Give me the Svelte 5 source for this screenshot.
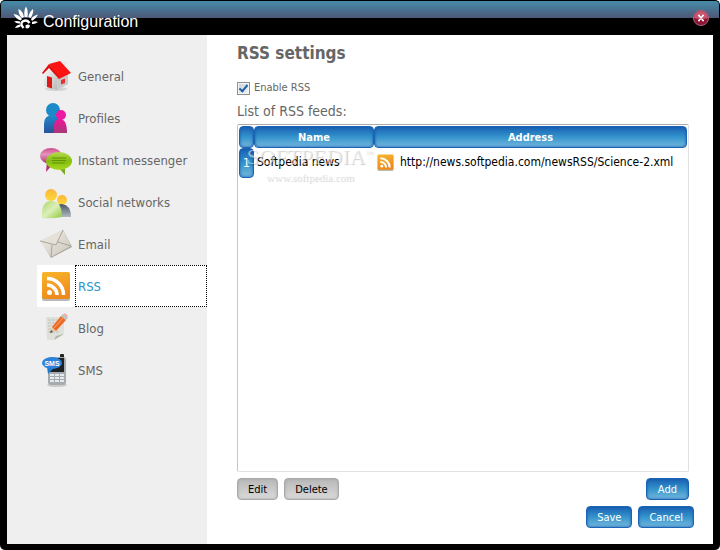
<script lang="ts">
	type Feed = { name: string; address: string };

	const sections = [
		"General",
		"Profiles",
		"Instant messenger",
		"Social networks",
		"Email",
		"RSS",
		"Blog",
		"SMS"
	];

	let current = $state("RSS");
	let enabled = $state(true);
	let feeds: Feed[] = $state([
		{ name: "Softpedia news", address: "http://news.softpedia.com/newsRSS/Science-2.xml" }
	]);
</script>

{#snippet rssIcon()}
	<rect x="1" y="2" width="28" height="28" rx="2" fill="#b9b9b9" />
	<rect x="1" y="1" width="28" height="27" rx="2" fill="url(#orange)" />
	<circle cx="8.500" cy="21.500" r="2.500" fill="#fff" />
	<path d="M6 14a10 10 0 0 1 10 10M6 7.500a16.500 16.500 0 0 1 16.500 16.500" fill="none" stroke="#fff" stroke-width="3.600" />
{/snippet}

<svg class="defs" width="0" height="0" aria-hidden="true">
	<defs>
		<linearGradient id="orange" x1="0" y1="0" x2="0.300" y2="1">
			<stop offset="0" stop-color="#f8b62c" />
			<stop offset="1" stop-color="#ee8a1c" />
		</linearGradient>
		<linearGradient id="wall" x1="0" y1="0" x2="1" y2="1">
			<stop offset="0" stop-color="#fff" />
			<stop offset="1" stop-color="#b5b5b5" />
		</linearGradient>
		<linearGradient id="blue" x1="0" y1="0" x2="0" y2="1">
			<stop offset="0" stop-color="#1d8dd0" />
			<stop offset="1" stop-color="#2b5299" />
		</linearGradient>
		<linearGradient id="pink" x1="0" y1="0" x2="0" y2="1">
			<stop offset="0" stop-color="#f0149c" />
			<stop offset="1" stop-color="#a83a78" />
		</linearGradient>
		<linearGradient id="rose" x1="0" y1="0" x2="0" y2="1">
			<stop offset="0" stop-color="#cf4d8e" />
			<stop offset="0.400" stop-color="#e493bd" />
			<stop offset="1" stop-color="#b32d70" />
		</linearGradient>
		<linearGradient id="lime" x1="0" y1="0" x2="0" y2="1">
			<stop offset="0" stop-color="#b2dc50" />
			<stop offset="0.500" stop-color="#88bd10" />
			<stop offset="1" stop-color="#a4d820" />
		</linearGradient>
		<linearGradient id="head" x1="0" y1="0" x2="0" y2="1">
			<stop offset="0" stop-color="#fbb53a" />
			<stop offset="1" stop-color="#ffda3a" />
		</linearGradient>
		<linearGradient id="mint" x1="0" y1="0" x2="1" y2="1">
			<stop offset="0" stop-color="#a9d86a" />
			<stop offset="0.500" stop-color="#dcefba" />
			<stop offset="1" stop-color="#8bc832" />
		</linearGradient>
		<linearGradient id="slate" x1="0" y1="0" x2="0" y2="1">
			<stop offset="0" stop-color="#4a5661" />
			<stop offset="1" stop-color="#aeb9c3" />
		</linearGradient>
		<linearGradient id="paper" x1="0" y1="0" x2="1" y2="1">
			<stop offset="0" stop-color="#f1eee8" />
			<stop offset="1" stop-color="#cbc7bc" />
		</linearGradient>
	</defs>
</svg>

<div class="window">
	<header>
		<svg class="logo" viewBox="0 0 26 24" width="26" height="24" aria-hidden="true">
			<g fill="#fff">
				<path d="M11.500 11Q10.500 5 13 0.500Q15.500 5 14.500 11Z" />
				<path d="M9 12Q5 8 5.500 3Q10 5 11 11Z" />
				<path d="M15.500 11Q16 6 20 3Q21 7 17.500 12Z" />
				<path d="M7.500 14.500Q3 13 0.500 8Q6 8.500 9 13Z" />
				<path d="M18 13Q20 9.500 25 8.500Q23 13 19 15Z" />
				<path d="M7 15.500Q4 14.500 1 15.500Q4 18 7 17.500Z" />
				<path d="M19 16Q22 14.500 25 16Q22 18.500 19 18Z" />
				<path d="M7 18.500Q3 19 2 22Q6 22 8 20Z" />
			</g>
			<path d="M10.500 22Q6.500 17.500 10 15.200Q14 13 16.500 17" fill="none" stroke="#fff" stroke-width="2.400" />
			<path d="M12.500 19.500Q15 17.500 17 19.500Q16.500 22.500 14 22.500Q12 22 12.500 19.500Z" fill="#fff" />
		</svg>
		<span class="title">Configuration</span>
		<button class="close" aria-label="Close">
			<svg viewBox="0 0 16 16" width="16" height="16" aria-hidden="true">
				<circle cx="8" cy="8" r="7.500" fill="#8d1432" stroke="#aa6478" />
				<path d="M1 8a7 7 0 0 1 14 0q-7 2-14 0z" fill="#c9566e" />
				<path d="M6 5.500l4 5M10 5.500l-4 5M5 5.500h2M9 5.500h2M5 10.500h2M9 10.500h2" stroke="#fff" stroke-width="1.500" />
			</svg>
		</button>
	</header>

	<div class="body">
		<nav>
			{#each sections as section}
				<button class="item" class:selected={section === current} onclick={() => (current = section)}>
					<span class="icon">
						<svg viewBox="0 0 34 34" width="34" height="34" aria-hidden="true">
							{#if section === "General"}
								<ellipse cx="17" cy="30" rx="11" ry="2" fill="#d4d4d4" />
								<path d="M5 13L10 7L19 19L18 31L5 27Z" fill="url(#wall)" />
								<path d="M19 18L29 14V25L18 31Z" fill="#c9c9c9" />
								<path d="M23 3h4v7h-4z" fill="#e8e8e8" />
								<path d="M10 5L21 2L32 14L20 20Z" fill="#fb1414" />
								<path d="M10 5L3 14L4 15L10 9L20 20L20 18Z" fill="#dd1010" />
								<path d="M8 17l5 1.500v11l-5-1.500z" fill="#e01818" />
								<path d="M22 21l4-1.500v4.500l-4 1.500z" fill="#e83030" />
							{:else if section === "Profiles"}
								<circle cx="14" cy="9" r="7" fill="#1b8ac8" />
								<path d="M5 32V23Q5 14 14 14Q23 14 22 32Z" fill="url(#blue)" />
								<circle cx="22" cy="14" r="5" fill="#ef18a2" />
								<path d="M15 32V25Q15 18 21 18Q28 18 28 32Z" fill="url(#pink)" />
							{:else if section === "Instant messenger"}
								<path d="M8 18L7 29L14 21Z" fill="#b32d70" />
								<ellipse cx="12" cy="13" rx="11" ry="8" fill="url(#rose)" />
								<path d="M19 24L26 32V22Z" fill="#78ac20" />
								<ellipse cx="20" cy="18" rx="13" ry="9" fill="url(#lime)" />
								<path d="M13 15h14M13 17.500h14M13 20h13" stroke="#5f9500" />
							{:else if section === "Social networks"}
								<circle cx="23" cy="15" r="5" fill="url(#head)" />
								<path d="M16 32V25Q16 19 23 19Q32 20 32 32Z" fill="url(#slate)" />
								<circle cx="12" cy="10" r="6" fill="url(#head)" />
								<path d="M3 33Q2 16 12 16Q23 16 23 32Q12 34 3 33Z" fill="url(#mint)" />
							{:else if section === "Email"}
								<path d="M2 14L24 3L33 20L12 31Z" fill="#aaa69a" />
								<path d="M1 14L24 3L32 19L12 30Z" fill="url(#paper)" />
								<path d="M12 30L13 18M32 19L19 15" stroke="#aaa598" fill="none" />
								<path d="M1 14L17 18L24 3" fill="#e5e1d8" stroke="#aaa598" />
							{:else if section === "RSS"}
								<g transform="translate(2 2)">{@render rssIcon()}</g>
							{:else if section === "Blog"}
								<path d="M7 6H25V23L15 29H8Z" fill="#e0e0da" />
								<path d="M15 29L17 25L25 23Z" fill="#aeb8a5" />
								<path d="M9 9h10M9 12h8M9 15h5M9 18h4M9 21h12" stroke="#c2c2bd" stroke-dasharray="3 1" />
								<path d="M11 22L13 16L17 20Z" fill="#e8c8a0" />
								<path d="M11 22L12 19L14 21Z" fill="#444" />
								<path d="M13 16L22 5L27 9L17 20Z" fill="#ed6a23" />
								<path d="M15 17L24 7" stroke="#ffa66e" />
								<path d="M22 5L24 3L29 7L27 9Z" fill="#bec3c8" />
								<path d="M24 3Q28 1 29 7Z" fill="#f5a79c" />
							{:else}
								<ellipse cx="18" cy="32" rx="10" ry="2" fill="#ccc" />
								<rect x="21" y="1" width="4" height="5" rx="1" fill="#222" />
								<rect x="9" y="4" width="18" height="28" rx="3" fill="#a6abaf" />
								<rect x="11" y="5" width="14" height="14" fill="#1d2124" />
								<path d="M11 22h4m1 0h4m1 0h4M11 25h4m1 0h4m1 0h4M11 28h4m1 0h4m1 0h4" stroke="#e4ebef" stroke-width="2" />
								<path d="M8 14L9 21L14 16Z" fill="#2179cf" />
								<ellipse cx="13" cy="10" rx="10" ry="6" fill="#2d83dc" />
								<text x="13" y="13" class="sms">SMS</text>
							{/if}
						</svg>
					</span>
					<span class="label">{section}</span>
				</button>
			{/each}
		</nav>

		<main>
			<h1>RSS settings</h1>
			<label class="check">
				<input type="checkbox" bind:checked={enabled} />
				Enable RSS
			</label>
			<h2 id="feeds">List of RSS feeds:</h2>

			<div class="list">
				<table aria-labelledby="feeds">
					<thead>
						<tr>
							<th class="num"></th>
							<th class="name">Name</th>
							<th>Address</th>
						</tr>
					</thead>
					<tbody>
						{#each feeds as feed, i}
							<tr>
								<th class="num">{i + 1}</th>
								<td>{feed.name}</td>
								<td>
									<span class="address">
										<svg viewBox="0 0 30 30" width="17" height="17" aria-hidden="true">{@render rssIcon()}</svg>
										{feed.address}
									</span>
								</td>
							</tr>
						{/each}
					</tbody>
				</table>
				<div class="watermark">
					<span class="brand">SOFTPEDIA<sup>™</sup></span>
					<span class="site">www.softpedia.com</span>
				</div>
			</div>

			<div class="actions">
				<button class="btn gray">Edit</button>
				<button class="btn gray">Delete</button>
				<button class="btn add">Add</button>
			</div>
			<footer>
				<button class="btn">Save</button>
				<button class="btn">Cancel</button>
			</footer>
		</main>
	</div>
</div>

<style>
	:global(body) {
		background: #fff;
	}

	.defs {
		position: absolute;
	}

	button {
		font-family: inherit;
		cursor: pointer;
	}

	.window {
		box-sizing: border-box;
		min-height: 100vh;
		display: flex;
		flex-direction: column;
		padding: 0 6px 6px;
		border: solid #000;
		border-width: 1px 1px 0 1px;
		border-radius: 5px;
		background: linear-gradient(#468baa, #4d5876 17px, #000 17px, #000);
		background-repeat: no-repeat;
		font-family: Tahoma, "DejaVu Sans Condensed", "DejaVu Sans", sans-serif;
		color: #666;
	}

	header {
		height: 34px;
		display: flex;
		align-items: center;
		padding: 0 4px 0 6px;
	}

	.title {
		flex: 1;
		margin-left: 4px;
		padding-top: 8px;
		font: 16px "Liberation Sans", Arial, sans-serif;
		color: #fff;
	}

	.close {
		display: flex;
		padding: 0;
		border: none;
		background: none;
	}

	.body {
		flex: 1;
		display: flex;
		background: #fff;
	}

	nav {
		box-sizing: border-box;
		width: 200px;
		flex: none;
		padding: 20px 0 0 30px;
		background: #efefef;
	}

	.item {
		display: flex;
		width: 100%;
		height: 42px;
		padding: 0;
		border: none;
		outline: none;
		background: none;
		color: #666;
		font-size: 13px;
		text-align: left;
	}

	.icon {
		width: 38px;
		height: 42px;
		display: flex;
		align-items: center;
		justify-content: center;
	}

	.label {
		box-sizing: border-box;
		flex: 1;
		height: 42px;
		padding-left: 2px;
		border: 1px solid transparent;
		line-height: 42px;
	}

	.selected {
		background: #fff;
		color: #2b95cc;
	}

	.selected .label {
		border: 1px dotted #000;
	}

	.sms {
		font: bold 7px "Liberation Sans", sans-serif;
		fill: #fff;
		text-anchor: middle;
	}

	main {
		flex: 1;
		min-width: 0;
		display: flex;
		flex-direction: column;
		padding: 8px 24px 16px 30px;
	}

	h1 {
		margin: 0;
		font-size: 17px;
		line-height: 20px;
	}

	.check {
		display: flex;
		align-items: center;
		gap: 4px;
		margin-top: 16px;
		font-size: 11px;
		line-height: 18px;
	}

	.check input {
		appearance: none;
		width: 13px;
		height: 13px;
		margin: 0;
		display: grid;
		place-items: center;
		border: 1px solid #8e8f8f;
		background: linear-gradient(135deg, #c6cfd6, #f6f6f6);
		box-shadow: inset 0 0 0 1px #f4f4f4;
	}

	.check input:checked::before {
		content: "";
		width: 3px;
		height: 7px;
		margin-top: -2px;
		border: solid #1d5fa8;
		border-width: 0 2px 2px 0;
		transform: rotate(40deg);
	}

	h2 {
		margin: 4px 0 0;
		font-size: 14px;
		font-weight: normal;
		line-height: 20px;
	}

	.list {
		position: relative;
		flex: 1;
		margin-top: 3px;
		padding: 1px 1px 0;
		border: 1px solid #dfe1e4;
		border-top: 1px solid #a9a9a9;
		border-left-color: #c4c6c9;
		border-radius: 2px;
	}

	table {
		width: 100%;
		table-layout: fixed;
		border-collapse: separate;
		border-spacing: 0;
		font-size: 12px;
		color: #000;
	}

	th,
	.btn {
		box-sizing: border-box;
		border: 1px solid #1c64b4;
		border-radius: 4px;
		background: linear-gradient(#1a62b4, #3494cc 50%, #75b8dc);
		box-shadow: inset 0 0 3px #1658ac;
		color: #fff;
	}

	th {
		height: 22px;
		padding: 0;
		font-size: 11px;
	}

	.num {
		width: 15px;
	}

	.name {
		width: 120px;
	}

	tbody .num {
		height: 30px;
		font-size: 12px;
		font-weight: normal;
	}

	td {
		padding: 0 3px 2px;
		white-space: nowrap;
	}

	.address {
		display: flex;
		align-items: center;
		gap: 6px;
	}

	.watermark {
		position: absolute;
		top: 20px;
		left: 7px;
		width: 130px;
		display: flex;
		flex-direction: column;
		align-items: center;
		pointer-events: none;
		font-family: "Liberation Serif", serif;
		color: rgba(255, 255, 255, 0.5);
		text-shadow: 1px 1px 1px rgba(0, 0, 0, 0.2);
	}

	.brand {
		font-size: 22px;
		line-height: 24px;
	}

	.brand sup {
		font-size: 8px;
		line-height: 8px;
	}

	.site {
		font-size: 11px;
		line-height: 16px;
	}

	.actions,
	footer {
		display: flex;
		gap: 6px;
		margin-top: 6px;
	}

	footer {
		justify-content: flex-end;
		margin-right: -5px;
	}

	.btn {
		height: 22px;
		padding: 0 10px;
		font-size: 11px;
	}

	.gray {
		border-color: #a9a9a9;
		background: linear-gradient(#b8b8b8, #dadada);
		box-shadow: inset 0 0 3px #a5a5a5;
		color: #000;
	}

	.add {
		margin-left: auto;
		padding: 0 11px;
	}
</style>
